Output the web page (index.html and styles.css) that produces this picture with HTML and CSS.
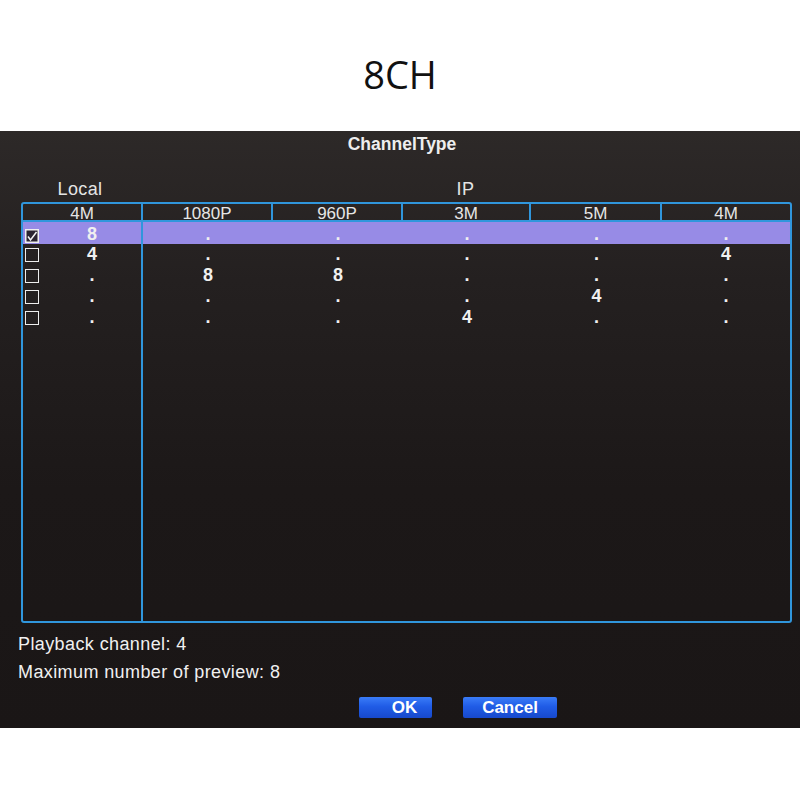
FILE: index.html
```html
<!DOCTYPE html>
<html>
<head>
<meta charset="utf-8">
<link rel="stylesheet" href="styles.css">
</head>
<body>
<div class="top"><h1 class="model">8CH</h1></div>
<div class="panel">
  <div class="dlg-title">ChannelType</div>
  <div class="groups"><span class="g-local">Local</span><span class="g-ip">IP</span></div>
  <div class="table">
    <div class="thead">
      <div class="th">4M</div><div class="th">1080P</div><div class="th">960P</div><div class="th">3M</div><div class="th">5M</div><div class="th last">4M</div>
    </div>
    <div class="row sel">
      <div class="c1"><span class="cb checked"><svg width="14" height="14" viewBox="0 0 14 14"><rect x="0.75" y="0.75" width="12.5" height="12.5" fill="#2a2430" stroke="#f0f0f0" stroke-width="1.5"/><polyline points="3,7.5 5.5,11 11.5,3" fill="none" stroke="#f4f4f4" stroke-width="1.5"/></svg></span><span class="v">8</span></div>
      <div class="td">.</div><div class="td">.</div><div class="td">.</div><div class="td">.</div><div class="td">.</div>
    </div>
    <div class="row">
      <div class="c1"><span class="cb"></span><span class="v">4</span></div>
      <div class="td">.</div><div class="td">.</div><div class="td">.</div><div class="td">.</div><div class="td">4</div>
    </div>
    <div class="row">
      <div class="c1"><span class="cb"></span><span class="v">.</span></div>
      <div class="td">8</div><div class="td">8</div><div class="td">.</div><div class="td">.</div><div class="td">.</div>
    </div>
    <div class="row">
      <div class="c1"><span class="cb"></span><span class="v">.</span></div>
      <div class="td">.</div><div class="td">.</div><div class="td">.</div><div class="td">4</div><div class="td">.</div>
    </div>
    <div class="row">
      <div class="c1"><span class="cb"></span><span class="v">.</span></div>
      <div class="td">.</div><div class="td">.</div><div class="td">4</div><div class="td">.</div><div class="td">.</div>
    </div>
    <div class="filler"><div class="c1"></div></div>
  </div>
  <p class="info">Playback channel: 4</p>
  <p class="info">Maximum number of preview: 8</p>
  <div class="buttons"><button class="btn ok">OK</button><button class="btn cancel">Cancel</button></div>
</div>
</body>
</html>
```
FILE: styles.css
```css
html, body {
  margin: 0;
  padding: 0;
  background: #ffffff;
}
body {
  width: 800px;
  font-family: "Liberation Sans", Arial, sans-serif;
}
.top {
  height: 131px;
  box-sizing: border-box;
  padding-top: 52px;
}
.model {
  margin: 0;
  font-family: "Open Sans", "Noto Sans", sans-serif;
  font-weight: 400;
  font-size: 38px;
  line-height: 44px;
  text-align: center;
  color: #111;
}
.panel {
  height: 597px;
  box-sizing: border-box;
  padding-top: 3px;
  background: linear-gradient(180deg, #2d2928 0%, #242020 25%, #1c1818 60%, #1a1616 100%);
  color: #ececec;
}
.dlg-title {
  font-weight: 700;
  font-size: 17.5px;
  line-height: 20px;
  text-align: center;
  padding-left: 4px;
  color: #eeeeee;
}
.groups {
  margin: 25px 0 0 23px;
  display: grid;
  grid-template-columns: 120px 647px;
  font-size: 18px;
  line-height: 20px;
  letter-spacing: 0.4px;
  color: #e4e4e4;
}
.g-local { text-align: center; padding-right: 6px; }
.g-ip { text-align: center; padding-right: 2px; }
.table {
  margin: 3px 0 0 21px;
  width: 771px;
  height: 421px;
  box-sizing: border-box;
  border: 2px solid #3096dc;
  border-radius: 3px;
  display: flex;
  flex-direction: column;
}
.thead, .row, .filler {
  display: grid;
  grid-template-columns: 120px 130px 130px 128px 131px 128px;
}
.thead {
  height: 16px;
  border-bottom: 2px solid #3096dc;
  font-size: 17px;
  line-height: 20px;
  color: #e6e6e6;
}
.th {
  text-align: center;
  border-right: 2px solid #3096dc;
}
.th.last { border-right: none; }
.row {
  height: 21px;
  font-size: 18px;
  line-height: 21px;
  font-weight: 700;
  color: #f0f0f0;
}
.row.sel {
  height: 22px;
  line-height: 24px;
  background: #978be6;
}
.c1 {
  display: flex;
  align-items: center;
  border-right: 2px solid #3096dc;
}
.td { text-align: center; }
.cb {
  width: 14px;
  height: 14px;
  margin-left: 2px;
  box-sizing: border-box;
  border: 1.5px solid #ededed;
  flex: none;
}
.cb.checked {
  border: none;
  margin-top: 4px;
}
.cb svg { display: block; }
.v {
  flex: 1;
  text-align: center;
  padding-left: 4px;
}
.filler { flex: 1; }
.info {
  margin: 0;
  padding-left: 18px;
  font-size: 18px;
  line-height: 28px;
  letter-spacing: 0.4px;
  color: #f0f0f0;
}
.info:first-of-type { margin-top: 7px; }
.buttons {
  display: flex;
  gap: 31px;
  margin-top: 11px;
  padding-left: 359px;
}
.btn {
  height: 21px;
  padding: 0;
  border: none;
  border-radius: 2px;
  background: linear-gradient(180deg, #3a7cf8 0%, #205ce6 45%, #1749cc 100%);
  color: #ffffff;
  font-family: "Liberation Sans", Arial, sans-serif;
  font-weight: 700;
  font-size: 17px;
  line-height: 21px;
}
.ok { width: 73px; padding-left: 18px; }
.cancel { width: 94px; }
```
